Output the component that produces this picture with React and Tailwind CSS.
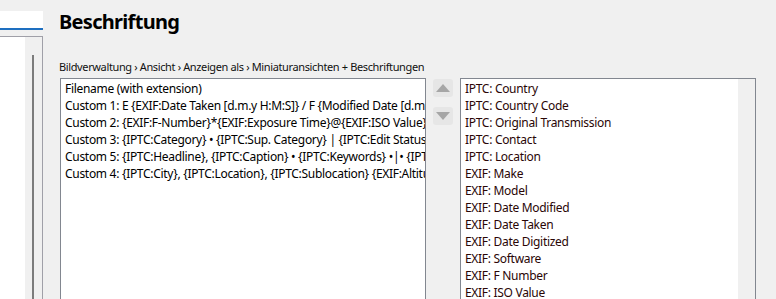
import React from "react";

const leftItems = [
  "Filename (with extension)",
  "Custom 1: E {EXIF:Date Taken [d.m.y H:M:S]} / F {Modified Date [d.m.y H:M:S]}",
  "Custom 2: {EXIF:F-Number}*{EXIF:Exposure Time}@{EXIF:ISO Value}@{EXIF:Focal Length}",
  "Custom 3: {IPTC:Category} • {IPTC:Sup. Category} | {IPTC:Edit Status} | {IPTC:Urgency}",
  "Custom 5: {IPTC:Headline}, {IPTC:Caption} • {IPTC:Keywords} •|• {IPTC:Credit}",
  "Custom 4: {IPTC:City}, {IPTC:Location}, {IPTC:Sublocation} {EXIF:Altitude}",
];

const rightItems = [
  "IPTC: Country",
  "IPTC: Country Code",
  "IPTC: Original Transmission",
  "IPTC: Contact",
  "IPTC: Location",
  "EXIF: Make",
  "EXIF: Model",
  "EXIF: Date Modified",
  "EXIF: Date Taken",
  "EXIF: Date Digitized",
  "EXIF: Software",
  "EXIF: F Number",
  "EXIF: ISO Value",
];

export default function App() {
  return (
    <div
      className="flex w-[776px] h-[299px] overflow-hidden bg-[#f0f0f0] text-black"
      style={{ fontFamily: '"Noto Sans", "Open Sans", sans-serif' }}
    >
      {/* Sidebar */}
      <div className="flex flex-col w-[43px] shrink-0">
        <div className="mt-[11px] h-[19px] bg-white border-b-2 border-[#1e6fc0]" />
        <div className="mt-[6px] flex-1 flex border-t border-r border-[#a0a0a8]">
          <div className="w-[25px] bg-white" />
          <div className="flex-1 flex pl-[7px] pt-[18px]">
            <div className="w-[2px] bg-[#7c7c7c]" />
          </div>
        </div>
      </div>

      {/* Main */}
      <div className="flex-1 flex flex-col pl-[15px] pr-[19px]">
        <div className="pt-[8px] pl-[1px] text-[20px] leading-[28px] font-bold tracking-[-0.7px]">
          Beschriftung
        </div>
        <div className="mt-[7px] h-px bg-[#8a8a8a]" />
        <div className="mt-[17px] pl-[1px] text-[11px] leading-[14px] tracking-[-0.37px] text-[#111]">
          Bildverwaltung › Ansicht › Anzeigen als › Miniaturansichten + Beschriftungen
        </div>
        <div className="mt-[4px] flex items-start">
          <div className="ml-[2px] w-[366px] h-[260px] shrink-0 bg-white border border-[#828790] overflow-hidden pt-[1px] pl-[4px] text-[12px] leading-[17px] tracking-[-0.3px]">
            {leftItems.map((t) => (
              <div key={t} className="whitespace-nowrap">
                {t}
              </div>
            ))}
          </div>
          <div className="ml-[7px] mt-[1px] flex flex-col gap-[10px]">
            <div className="w-[20px] h-[18px] rounded-[3px] bg-[#e6e6e6] flex items-center justify-center">
              <svg width="14" height="8" viewBox="0 0 14 8">
                <path d="M0 8 L7 0 L14 8 Z" fill="#a6a6a6" />
              </svg>
            </div>
            <div className="w-[20px] h-[18px] rounded-[3px] bg-[#e6e6e6] flex items-center justify-center">
              <svg width="14" height="8" viewBox="0 0 14 8">
                <path d="M0 0 L14 0 L7 8 Z" fill="#a6a6a6" />
              </svg>
            </div>
          </div>
          <div className="ml-[7px] w-[296px] h-[260px] shrink-0 border border-[#828790] flex overflow-hidden">
            <div className="flex-1 bg-white pt-[1px] pl-[4px] text-[12px] leading-[17px] tracking-[-0.3px] text-[#2a0606]">
              {rightItems.map((t) => (
                <div key={t} className="whitespace-nowrap">
                  {t}
                </div>
              ))}
            </div>
            <div className="w-[17px] bg-[#f0f0f0]" />
          </div>
        </div>
      </div>
    </div>
  );
}
